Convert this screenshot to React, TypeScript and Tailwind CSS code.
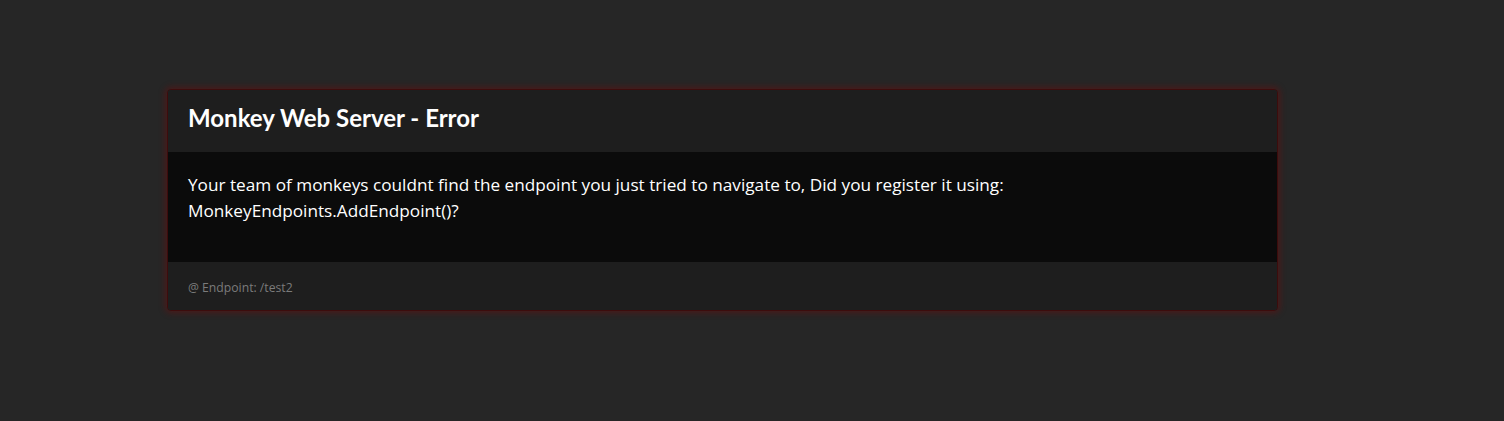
export default function App() {
  return (
    <div
      className="min-h-[421px] w-full bg-[#262626] pt-[89px]"
      style={{ fontFamily: '"Open Sans", "Noto Sans", sans-serif' }}
    >
      <div className="ml-[167px] w-[1111px] overflow-hidden rounded-[4px] border border-[#3d0c0c] shadow-[0_0_6px_2px_rgba(120,10,10,0.45)]">
        <div className="h-[62px] bg-[#1e1e1e] px-5 pt-[13px]">
          <h3
            className="text-[24px] leading-[29px] font-bold text-white"
            style={{ fontFamily: 'Lato, sans-serif' }}
          >
            Monkey Web Server - Error
          </h3>
        </div>
        <div className="h-[110px] bg-[#0b0b0b] px-5 pt-[20px]">
          <p className="text-[17.2px] leading-[26px] text-white">
            Your team of monkeys couldnt find the endpoint you just tried to navigate to, Did you register it using:
            <br />
            MonkeyEndpoints.AddEndpoint()?
          </p>
        </div>
        <div className="flex h-[48px] items-center bg-[#1e1e1e] px-5 pt-1">
          <span className="text-[12.2px] text-[#7b7b7b]">@ Endpoint: /test2</span>
        </div>
      </div>
    </div>
  )
}
